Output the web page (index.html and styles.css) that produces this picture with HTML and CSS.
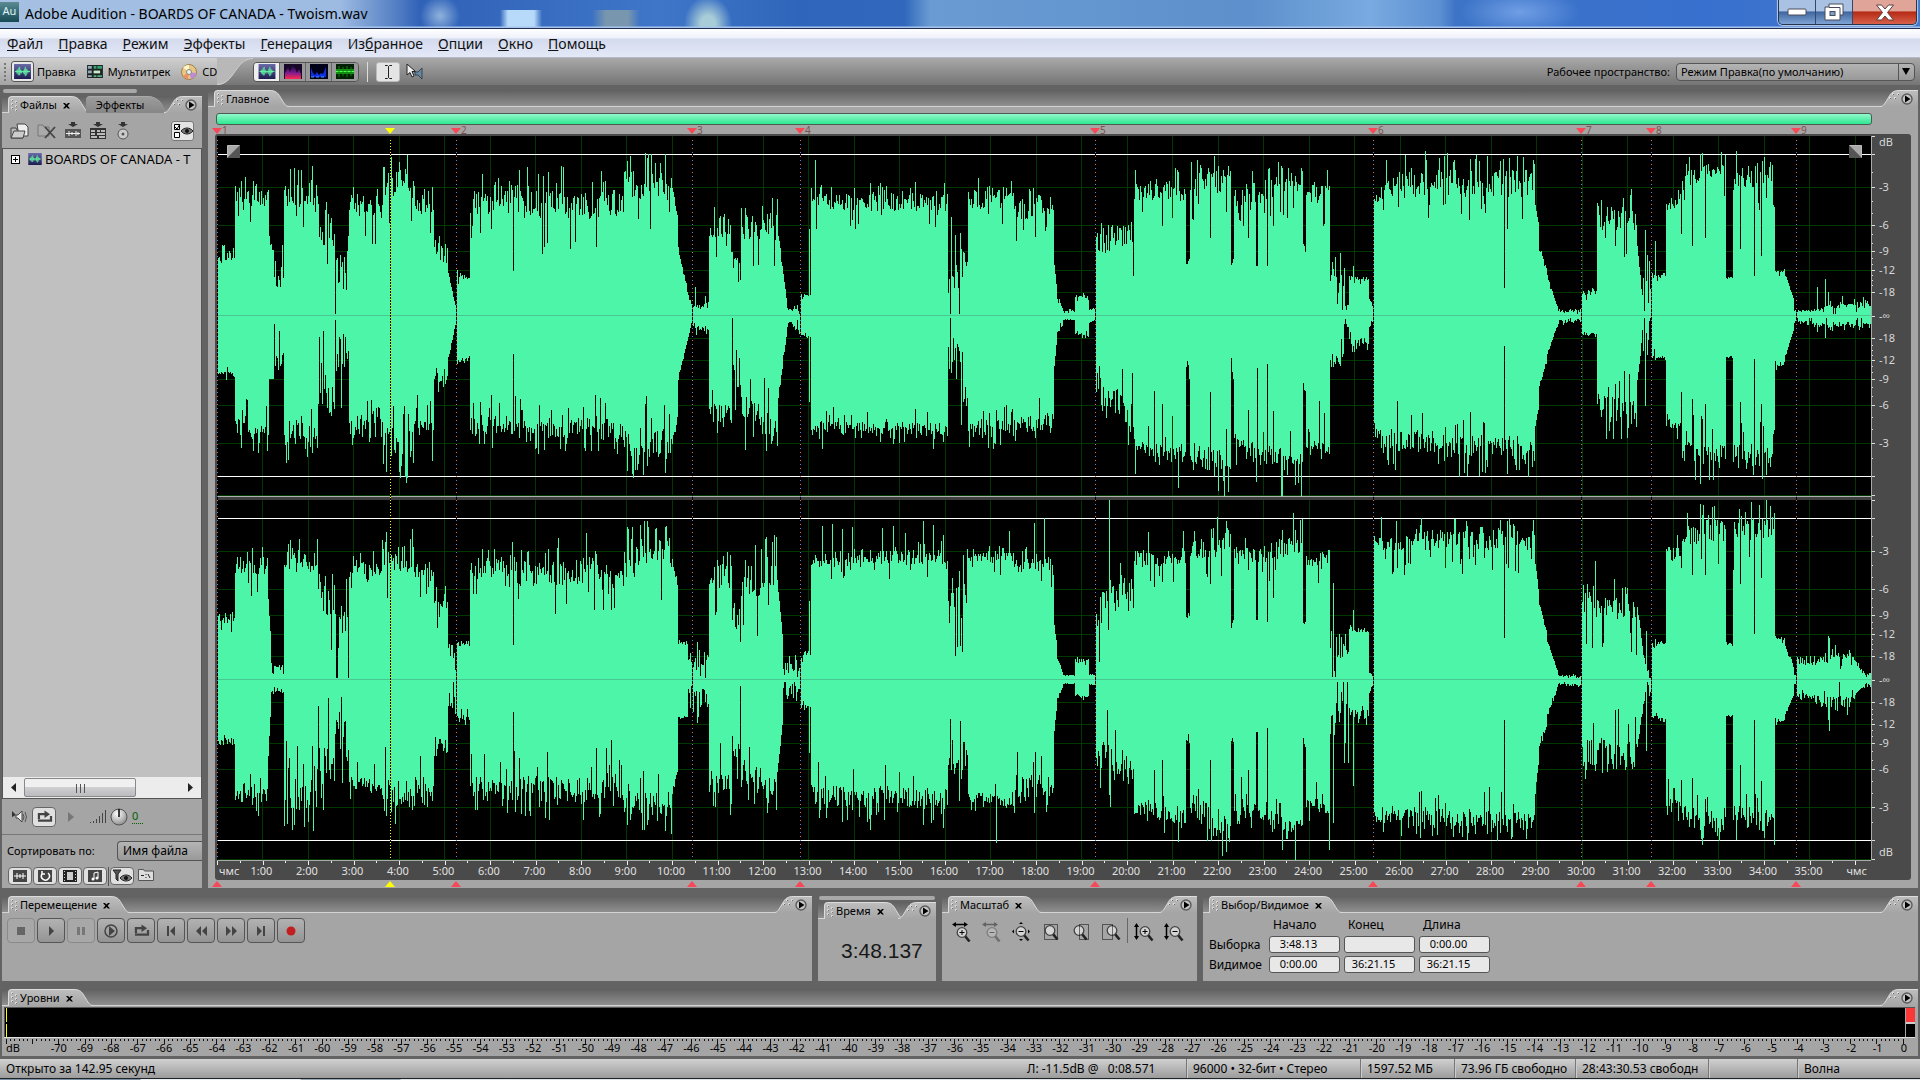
FILE: index.html
```html
<!DOCTYPE html>
<html lang="ru">
<head>
    <meta charset="UTF-8">
    <meta name="viewport" content="width=device-width, initial-scale=1.0">
    <title>Adobe Audition - BOARDS OF CANADA - Twoism.wav</title>
    <link rel="stylesheet" href="styles.css">
</head>
<body>
    <!-- Shared icons -->
    <svg class="defs" width="0" height="0" aria-hidden="true">
        <defs>
            <linearGradient id="tabFill" x1="0" y1="0" x2="0" y2="1">
                <stop offset="0" stop-color="#bdbdbd"/>
                <stop offset="1" stop-color="#a5a5a5"/>
            </linearGradient>
            <linearGradient id="navy" x1="0" y1="0" x2="0" y2="1">
                <stop offset="0" stop-color="#6a6aa8"/>
                <stop offset="1" stop-color="#1c1c50"/>
            </linearGradient>
            <linearGradient id="fire" x1="0" y1="0" x2="0" y2="1">
                <stop offset="0" stop-color="#1a0838"/>
                <stop offset="0.5" stop-color="#7a1a90"/>
                <stop offset="1" stop-color="#ff2a50"/>
            </linearGradient>
            <radialGradient id="knob" cx="0.4" cy="0.3" r="0.8">
                <stop offset="0" stop-color="#ffffff"/>
                <stop offset="1" stop-color="#808080"/>
            </radialGradient>
        </defs>
        <symbol id="slope" viewBox="0 0 20 17">
            <path d="M0 0.5 C8 0.5 9 3 13 10 C16 15 17 16.5 20 16.5 V17 H0 Z" fill="url(#tabFill)"/>
            <path d="M0 0.5 C8 0.5 9 3 13 10 C16 15 17 16.5 20 16.5" fill="none" stroke="#dcdcdc"/>
        </symbol>
        <symbol id="grip" viewBox="0 0 6 14">
            <path d="M0 1h2v2H0zM0 5h2v2H0zM0 9h2v2H0zM4 3h2v2H4zM4 7h2v2H4zM4 11h2v2H4z" fill="#d8d8d8"/>
            <path d="M1 2h1v1H1zM1 6h1v1H1zM1 10h1v1H1zM5 4h1v1H5zM5 8h1v1H5zM5 12h1v1H5z" fill="#777"/>
        </symbol>
        <symbol id="cornerDots" viewBox="0 0 12 8">
            <path d="M4 0h2v2H4zM9 0h2v2H9zM1 4h2v2H1zM6 4h2v2H6z" fill="#dadada"/>
            <path d="M5 1h1v1H5zM10 1h1v1h-1zM2 5h1v1H2zM7 5h1v1H7z" fill="#666"/>
        </symbol>
        <symbol id="menuPlay" viewBox="0 0 12 12">
            <circle cx="6" cy="6" r="5" fill="#c4c4c4" stroke="#5c5c5c" stroke-width="1.4"/>
            <path d="M4 2.5L9.5 6L4 9.5Z" fill="#000"/>
        </symbol>
        <symbol id="cross" viewBox="0 0 7 7">
            <path d="M0 1h2l1.500 1.500L5 1h2L4.600 3.800L7 6.500H5L3.500 5L2 6.500H0L2.400 3.800Z" fill="#000"/>
        </symbol>
        <symbol id="wave" viewBox="0 0 18 16">
            <rect width="18" height="16" fill="url(#navy)"/>
            <path d="M1 8h16M3 6v4M4 6v5M5 4v8M6 3v9M7 6v4M8 7v3M10 7v3M11 5v6M12 3v10M13 5v7M14 6v4M15 7v2" stroke="#60f0a0"/>
        </symbol>
        <symbol id="multitrack" viewBox="0 0 17 14">
            <rect width="17" height="14" fill="#1c2424"/>
            <path d="M1 1h4v3H1zM1 6h4v3H1zM1 11h4v2H1z" fill="#9ab"/>
            <path d="M7 1h3v3H7zM11 1h5v3h-5z" fill="#35a070"/>
            <path d="M7 6h7v3H7z" fill="#c8ecc8"/>
            <path d="M7 11h3v2H7zM11 11h5v2h-5z" fill="#50b080"/>
        </symbol>
        <symbol id="arrowDown" viewBox="0 0 10 5">
            <path d="M3 0h4v2h3L5 5L0 2h3z" fill="#333"/>
        </symbol>
        <symbol id="loop" viewBox="0 0 18 14">
            <path d="M3 10V4.500H10" fill="none" stroke="#444" stroke-width="2.400"/>
            <path d="M9 0.500L15 4.500L9 8.500Z" fill="#444"/>
            <path d="M2 11.500H16V6.500" fill="none" stroke="#444" stroke-width="2.400"/>
        </symbol>
        <symbol id="lens" viewBox="0 0 16 18">
            <path d="M10 11L14.500 16.500" stroke="#222" stroke-width="2.600"/>
            <circle cx="7" cy="7.500" r="4.800" fill="#d4d4d4" stroke="#444" stroke-width="1.300"/>
        </symbol>
        <symbol id="eye" viewBox="0 0 12 8">
            <path d="M0 4C3 0 9 0 12 4C9 8 3 8 0 4Z" fill="#777" stroke="#222"/>
            <circle cx="6" cy="4" r="2" fill="#111"/>
        </symbol>
    </svg>

    <header class="titlebar">
        <span class="app-icon">Au</span>
        <h1>Adobe Audition - BOARDS OF CANADA - Twoism.wav</h1>
        <div class="window-buttons">
            <button class="win-btn" aria-label="Свернуть">
                <svg width="20" height="8"><rect x="1" y="1" width="18" height="6" rx="1" fill="#fff" stroke="#4a4a5a"/></svg>
            </button>
            <button class="win-btn" aria-label="Развернуть">
                <svg width="20" height="18"><path d="M5 1h14v11h-3v5H1V4h4z" fill="#fff" stroke="#4a4a5a"/><path d="M5 4.500h11V12" fill="none" stroke="#4a4a5a"/><rect x="6" y="8.500" width="5" height="4" fill="#7fa0c8" stroke="#4a4a5a"/></svg>
            </button>
            <button class="win-btn win-close" aria-label="Закрыть">
                <svg width="20" height="17"><path d="M1.500 1h5L10 5l3.500-4h5l-6 7.500l6 7.500h-5L10 12l-3.500 4h-5l6-7.500z" fill="#fff" stroke="#5a4040"/></svg>
            </button>
        </div>
    </header>

    <nav class="menubar">
        <a href="#"><u>Ф</u>айл</a>
        <a href="#"><u>П</u>равка</a>
        <a href="#"><u>Р</u>ежим</a>
        <a href="#"><u>Э</u>ффекты</a>
        <a href="#"><u>Г</u>енерация</a>
        <a href="#">Из<u>б</u>ранное</a>
        <a href="#"><u>О</u>пции</a>
        <a href="#"><u>О</u>кно</a>
        <a href="#"><u>П</u>омощь</a>
    </nav>

    <div class="toolbar">
        <div class="modes">
            <svg class="mode-grip" width="6" height="20"><path d="M1 1h2v2H1zM1 5h2v2H1zM1 9h2v2H1zM1 13h2v2H1zM1 17h2v2H1z" fill="#777"/></svg>
            <button class="mode mode-on"><span class="mode-icon"><svg width="17" height="15"><use href="#wave"/></svg></span>Правка</button>
            <button class="mode"><svg width="16" height="13"><use href="#multitrack"/></svg>Мультитрек</button>
            <button class="mode mode-cd">
                <svg width="16" height="16"><circle cx="8" cy="8" r="7.500" fill="#e8c880" stroke="#a08050"/><path d="M8 8L2 3.500A7 7 0 0 1 8 1Z" fill="#fff6d0"/><path d="M8 8L15 9A7 7 0 0 1 10 15Z" fill="#c08adc"/><path d="M8 8L2 12A7 7 0 0 0 7 15Z" fill="#f09060"/><circle cx="8" cy="8" r="2.500" fill="#eee" stroke="#887"/></svg>CD</button>
        </div>
        <svg class="mode-slope" width="36" height="27" viewBox="0 0 36 27"><path d="M0 0H36C18 0 18 27 0 27Z" fill="#b8b8b8"/><path d="M36 0.500C18 0.500 18 26.500 0 26.500" fill="none" stroke="#cfcfcf"/></svg>
        <div class="views">
            <button class="view view-on" aria-label="Форма волны"><svg width="18" height="15"><use href="#wave"/></svg></button>
            <button class="view" aria-label="Спектр"><svg width="18" height="15"><rect width="18" height="15" fill="#180828"/><path d="M1 15V9L4 3L6 8L8 2L11 4L13 9L15 5L17 10V15Z" fill="url(#fire)"/></svg></button>
            <button class="view" aria-label="Панорама"><svg width="18" height="15"><rect width="18" height="15" fill="#000018"/><path d="M1 13V4L3 9L5 11L7 8L9 11L11 9L13 10L16 3V13Z" fill="#1030e0"/><path d="M1 13h15" stroke="#40a0ff" stroke-dasharray="3 2"/></svg></button>
            <button class="view" aria-label="Фаза"><svg width="18" height="15"><rect width="18" height="15" fill="#042004"/><path d="M0 5h18v5H0z" fill="#109010"/><path d="M0 7.500h18" stroke="#50ff50"/><path d="M3 2v11M7 3v9M11 2v11M15 3v9" stroke="#108010"/></svg></button>
        </div>
        <span class="tool-sep"></span>
        <button class="tool tool-on" aria-label="Выделение времени"><svg width="9" height="16"><path d="M1 1.500H3.500L4.500 2.500L5.500 1.500H8M4.500 2.500V13.500M1 14.500H3.500L4.500 13.500L5.500 14.500H8" fill="none" stroke="#222"/></svg></button>
        <button class="tool" aria-label="Прослушивание"><svg width="18" height="17"><path d="M1 1V12L4 9.500L6 14L8 13L6 8.500H9.500Z" fill="#eee" stroke="#222"/><path d="M9 9h3l4-4v11l-4-4H9z" fill="#6888a0" stroke="#345"/></svg></button>
        <span class="spacer"></span>
        <label class="ws-label" for="workspace">Рабочее пространство:</label>
        <select id="workspace" class="ws-select"><option>Режим Правка(по умолчанию)</option></select>
    </div>

    <main class="work">
        <section class="panel files">
            <div class="drag-bar"></div>
            <div class="panel-head">
                <div class="tab"><svg width="6" height="14"><use href="#grip"/></svg>Файлы<svg class="close" width="7" height="7"><use href="#cross"/></svg></div>
                <svg class="slope" width="20" height="17"><use href="#slope"/></svg>
                <div class="tab-back">Эффекты</div>
                <span class="spacer"></span>
                <svg class="slope flip" width="20" height="17"><use href="#slope"/></svg>
                <div class="corner"><svg class="dots" width="12" height="8"><use href="#cornerDots"/></svg><button aria-label="Меню панели"><svg width="12" height="12"><use href="#menuPlay"/></svg></button></div>
            </div>
            <div class="file-tools">
                <button aria-label="Импорт"><svg width="20" height="18"><path d="M1 6h5l1 2h6v8H1z" fill="#bbb" stroke="#444"/><path d="M7 2h8l3 3v9H9z" fill="#eee" stroke="#444"/><path d="M1 16L4 9h11l-2 7z" fill="#ccc" stroke="#444"/></svg></button>
                <button aria-label="Закрыть файлы"><svg width="20" height="18"><path d="M1 3h5l1 2h5v9H1z" fill="#aaa" stroke="#777"/><path d="M8 5L18 16M18 5L8 16" stroke="#444" stroke-width="1.800"/></svg></button>
                <button aria-label="Вставить в правку"><svg width="18" height="18"><use href="#arrowDown" x="4" width="10" height="5"/><path d="M1 7h16v9H1z" fill="#555"/><path d="M2 11.500h14M5 9v5M8 10v3M12 9v5M14 10v3" stroke="#eee"/></svg></button>
                <button aria-label="Вставить в мультитрек"><svg width="18" height="18"><use href="#arrowDown" x="4" width="10" height="5"/><path d="M1 6h16v11H1z" fill="#333"/><path d="M2 8h4v2H2zM8 8h3v2H8zM12 8h4v2h-4zM2 11h4v2H2zM8 11h8v2H8zM2 14h6v2H2zM10 14h6v2h-6z" fill="#bbb"/></svg></button>
                <button aria-label="Вставить в CD"><svg width="18" height="18"><use href="#arrowDown" x="4" width="10" height="5"/><circle cx="9" cy="12" r="5" fill="#ccc" stroke="#555"/><circle cx="9" cy="12" r="1.500" fill="#555"/></svg></button>
                <span class="spacer"></span>
                <button class="file-options" aria-label="Параметры"><svg width="20" height="16"><path d="M1.500 1.500h5v5h-5zM1.500 9.500h5v5h-5z" fill="#fff" stroke="#000"/><path d="M2 4l2 2l3-5" fill="none" stroke="#000"/><use href="#eye" x="8" y="4" width="12" height="8"/></svg></button>
            </div>
            <div class="file-list">
                <div class="file-row">
                    <svg width="9" height="9"><rect x="0.500" y="0.500" width="8" height="8" fill="#fff" stroke="#000"/><path d="M2 4.500h5M4.500 2v5" stroke="#000"/></svg>
                    <svg width="14" height="12"><use href="#wave"/></svg>
                    <span>BOARDS OF CANADA - T</span>
                </div>
                <div class="hscroll">
                    <button aria-label="Влево"><svg width="6" height="9"><path d="M5 0v9L0 4.500z" fill="#222"/></svg></button>
                    <div class="hscroll-track"><div class="hscroll-thumb"><svg width="11" height="9"><path d="M1.500 0v9M5.500 0v9M9.500 0v9" stroke="#555"/></svg></div></div>
                    <button aria-label="Вправо"><svg width="6" height="9"><path d="M0 0v9L5 4.500z" fill="#222"/></svg></button>
                </div>
            </div>
            <div class="preview">
                <svg width="17" height="16"><path d="M1 2v6l4-2z" fill="#333"/><path d="M5 6h2l4-4v11l-4-4H5z" fill="#eee" stroke="#444"/><path d="M12 5q2 3 0 6M14 3q3 5 0 10" fill="none" stroke="#555"/></svg>
                <button class="light" aria-label="Цикл"><svg width="17" height="13"><use href="#loop"/></svg></button>
                <svg class="preview-play" width="6" height="10"><path d="M0 0v10L6 5z" fill="#777"/></svg>
                <svg width="16" height="14"><path d="M0.500 12v1M3.500 11v2M6.500 9v4M9.500 6v7M12.500 3v10M15.500 0v13" stroke="#444"/></svg>
                <svg width="18" height="18"><circle cx="9" cy="9" r="8" fill="url(#knob)" stroke="#555"/><path d="M9 1v8" stroke="#000" stroke-width="1.500"/></svg>
                <a class="volume" href="#">0</a>
            </div>
            <div class="sort">
                <label for="sort">Сортировать по:</label>
                <select id="sort"><option>Имя файла</option></select>
            </div>
            <div class="filters">
                <button class="light" aria-label="Звук"><svg width="14" height="12"><rect width="14" height="12" fill="#444"/><path d="M1 6h12M4 3v6M7 4v4M10 3v6" stroke="#fff"/></svg></button>
                <button class="light" aria-label="Петли"><svg width="14" height="12"><rect width="14" height="12" fill="#444"/><path d="M4 4a4 4 0 1 0 6-1M4 1v3h3" fill="none" stroke="#fff" stroke-width="1.500"/></svg></button>
                <button class="light" aria-label="Видео"><svg width="14" height="12"><rect width="14" height="12" fill="#222"/><path d="M4 2h6v8H4zM1 1h1v1H1zM1 4h1v1H1zM1 7h1v1H1zM1 10h1v1H1zM12 1h1v1h-1zM12 4h1v1h-1zM12 7h1v1h-1zM12 10h1v1h-1z" fill="#ccc"/></svg></button>
                <button class="light" aria-label="MIDI"><svg width="14" height="12"><rect width="14" height="12" fill="#444"/><path d="M6 9V3l4-1v6" fill="none" stroke="#fff"/><circle cx="5" cy="9" r="1.500" fill="#fff"/><circle cx="9" cy="8" r="1.500" fill="#fff"/></svg></button>
                <span class="filter-sep"></span>
                <button class="light" aria-label="Фильтр"><svg width="20" height="15"><path d="M1 1h8L6 5v7L4 10V5z" fill="#555" stroke="#222"/><use href="#eye" x="8" y="5" width="12" height="8"/></svg></button>
                <button class="path-btn" aria-label="Полный путь"><svg width="16" height="12"><path d="M0.500 0.500h5l1 1.500h9v9.500h-15z" fill="#ddd" stroke="#555"/><path d="M3 6.500h3M8 5v1M8 8v1M10 5l2 4" stroke="#222"/></svg></button>
            </div>
        </section>

        <section class="panel main">
            <div class="panel-head">
                <div class="tab"><svg width="6" height="14"><use href="#grip"/></svg>Главное</div>
                <svg class="slope" width="20" height="17"><use href="#slope"/></svg>
                <span class="spacer"></span>
                <svg class="slope flip" width="20" height="17"><use href="#slope"/></svg>
                <div class="corner"><svg class="dots" width="12" height="8"><use href="#cornerDots"/></svg><button aria-label="Меню панели"><svg width="12" height="12"><use href="#menuPlay"/></svg></button></div>
            </div>
            <div class="editor">
                <div class="overview"></div>
                <div class="markers" id="markersTop"></div>
                <div class="frame">
                    <div class="plot" id="plot">
                        <svg class="channel" id="left" viewBox="0 0 1654 360" preserveAspectRatio="none"></svg>
                        <div class="divider"></div>
                        <svg class="channel" id="right" viewBox="0 0 1654 360" preserveAspectRatio="none"></svg>
                        <svg class="fade fade-in" width="13" height="13"><rect width="13" height="13" fill="#555"/><path d="M1 12V1H12z" fill="#aaa"/><path d="M0.500 12.500V0.500H12.500" fill="none" stroke="#bbb"/></svg>
                        <svg class="fade fade-out" width="13" height="13"><rect width="13" height="13" fill="#555"/><path d="M1 1H12V12z" fill="#aaa"/><path d="M0.500 0.500H12.500V12.500" fill="none" stroke="#bbb"/></svg>
                    </div>
                    <div class="scale">
                        <div class="scale-half" id="scaleLeft"></div>
                        <div class="scale-gap"></div>
                        <div class="scale-half" id="scaleRight"></div>
                    </div>
                    <div class="timeline" id="timeline"></div>
                </div>
                <div class="markers markers-low" id="markersLow"></div>
            </div>
        </section>
    </main>

    <div class="dock">
        <section class="panel transport">
            <div class="panel-head">
                <div class="tab"><svg width="6" height="14"><use href="#grip"/></svg>Перемещение<svg class="close" width="7" height="7"><use href="#cross"/></svg></div>
                <svg class="slope" width="20" height="17"><use href="#slope"/></svg>
                <span class="spacer"></span>
                <svg class="slope flip" width="20" height="17"><use href="#slope"/></svg>
                <div class="corner"><svg class="dots" width="12" height="8"><use href="#cornerDots"/></svg><button aria-label="Меню панели"><svg width="12" height="12"><use href="#menuPlay"/></svg></button></div>
            </div>
            <div class="transport-row">
                <button disabled aria-label="Стоп"><svg width="16" height="14"><path d="M4 3h8v8H4z" fill="#666"/></svg></button>
                <button aria-label="Пуск"><svg width="16" height="14"><path d="M6 2v10l5-5z" fill="#444"/></svg></button>
                <button disabled aria-label="Пауза"><svg width="16" height="14"><path d="M4 3h3v8H4zM9 3h3v8H9z" fill="#777"/></svg></button>
                <button aria-label="До конца"><svg width="16" height="14"><circle cx="8" cy="7" r="6" fill="none" stroke="#444" stroke-width="1.500"/><path d="M6 2v10l6-5z" fill="#444"/></svg></button>
                <button aria-label="Цикл"><svg width="17" height="13"><use href="#loop"/></svg></button>
                <button aria-label="В начало"><svg width="16" height="14"><path d="M4 2h2v10H4zM12 2v10L7 7z" fill="#444"/></svg></button>
                <button aria-label="Назад"><svg width="16" height="14"><path d="M8 2v10L3 7zM14 2v10L9 7z" fill="#444"/></svg></button>
                <button aria-label="Вперёд"><svg width="16" height="14"><path d="M3 2v10l5-5zM9 2v10l5-5z" fill="#444"/></svg></button>
                <button aria-label="В конец"><svg width="16" height="14"><path d="M4 2v10l5-5zM10 2h2v10h-2z" fill="#444"/></svg></button>
                <button aria-label="Запись"><svg width="16" height="14"><circle cx="8" cy="7" r="4.500" fill="#c22020"/></svg></button>
            </div>
        </section>

        <section class="panel time">
            <div class="drag-bar"></div>
            <div class="panel-head">
                <div class="tab"><svg width="6" height="14"><use href="#grip"/></svg>Время<svg class="close" width="7" height="7"><use href="#cross"/></svg></div>
                <svg class="slope" width="20" height="17"><use href="#slope"/></svg>
                <span class="spacer"></span>
                <svg class="slope flip" width="20" height="17"><use href="#slope"/></svg>
                <div class="corner"><svg class="dots" width="12" height="8"><use href="#cornerDots"/></svg><button aria-label="Меню панели"><svg width="12" height="12"><use href="#menuPlay"/></svg></button></div>
            </div>
            <div class="clock">3:48.137</div>
        </section>

        <section class="panel zoom">
            <div class="panel-head">
                <div class="tab"><svg width="6" height="14"><use href="#grip"/></svg>Масштаб<svg class="close" width="7" height="7"><use href="#cross"/></svg></div>
                <svg class="slope" width="20" height="17"><use href="#slope"/></svg>
                <span class="spacer"></span>
                <svg class="slope flip" width="20" height="17"><use href="#slope"/></svg>
                <div class="corner"><svg class="dots" width="12" height="8"><use href="#cornerDots"/></svg><button aria-label="Меню панели"><svg width="12" height="12"><use href="#menuPlay"/></svg></button></div>
            </div>
            <div class="zoom-row">
                <button aria-label="Увеличить по горизонтали"><svg width="20" height="20"><use href="#lens" x="4" y="3" width="16" height="18"/><path d="M8.500 10.500h5M11 8v5" stroke="#000"/><path d="M3 2.500h12" stroke="#000" stroke-width="1.500"/><path d="M1 2.500L5 0v5zM17 2.500L13 0v5z"/></svg></button>
                <button disabled aria-label="Уменьшить по горизонтали"><svg width="20" height="20"><use href="#lens" x="4" y="3" width="16" height="18"/><path d="M8.500 10.500h5" stroke="#000"/><path d="M3 2.500h12" stroke="#000" stroke-width="1.500"/><path d="M1 2.500L5 0v5zM17 2.500L13 0v5z"/></svg></button>
                <button aria-label="Показать всё"><svg width="20" height="20"><use href="#lens" x="3" y="2" width="16" height="18"/><path d="M7.500 9.500h5" stroke="#000"/><path d="M10 0l2 2H8zM10 19l2-2H8zM1 9.500l2-2v4zM19 9.500l-2-2v4z"/></svg></button>
                <button aria-label="К выделению"><svg width="20" height="20"><path d="M3.500 2.500h13v15h-13z" fill="none" stroke="#000" stroke-dasharray="1 1"/><use href="#lens" x="2" y="1" width="16" height="18"/></svg></button>
                <button aria-label="К левому краю"><svg width="20" height="20"><use href="#lens" x="1" y="1" width="16" height="18"/><path d="M8.500 2.500h9v15h-9z" fill="none" stroke="#000" stroke-dasharray="1 1"/></svg></button>
                <button aria-label="К правому краю"><svg width="20" height="20"><use href="#lens" x="4" y="1" width="16" height="18"/><path d="M1.500 2.500h10v15h-10z" fill="none" stroke="#000" stroke-dasharray="1 1"/></svg></button>
                <span class="zoom-sep"></span>
                <button aria-label="Увеличить по вертикали"><svg width="20" height="20"><use href="#lens" x="4" y="2" width="16" height="18"/><path d="M8.500 9.500h5M11 7v5" stroke="#000"/><path d="M2.500 3v12" stroke="#000" stroke-width="1.500"/><path d="M2.500 1L5 5H0zM2.500 18L5 14H0z"/></svg></button>
                <button aria-label="Уменьшить по вертикали"><svg width="20" height="20"><use href="#lens" x="4" y="2" width="16" height="18"/><path d="M8.500 9.500h5" stroke="#000"/><path d="M2.500 3v12" stroke="#000" stroke-width="1.500"/><path d="M2.500 1L5 5H0zM2.500 18L5 14H0z"/></svg></button>
            </div>
        </section>

        <section class="panel selection">
            <div class="panel-head">
                <div class="tab"><svg width="6" height="14"><use href="#grip"/></svg>Выбор/Видимое<svg class="close" width="7" height="7"><use href="#cross"/></svg></div>
                <svg class="slope" width="20" height="17"><use href="#slope"/></svg>
                <span class="spacer"></span>
                <svg class="slope flip" width="20" height="17"><use href="#slope"/></svg>
                <div class="corner"><svg class="dots" width="12" height="8"><use href="#cornerDots"/></svg><button aria-label="Меню панели"><svg width="12" height="12"><use href="#menuPlay"/></svg></button></div>
            </div>
            <table class="ranges">
                <tr><td></td><th scope="col">Начало</th><th scope="col">Конец</th><th scope="col">Длина</th></tr>
                <tr>
                    <th scope="row">Выборка</th>
                    <td><input value="3:48.13" aria-label="Выборка начало"></td>
                    <td><input value="" aria-label="Выборка конец"></td>
                    <td><input value="0:00.00" aria-label="Выборка длина"></td>
                </tr>
                <tr>
                    <th scope="row">Видимое</th>
                    <td><input value="0:00.00" aria-label="Видимое начало"></td>
                    <td><input value="36:21.15" aria-label="Видимое конец"></td>
                    <td><input value="36:21.15" aria-label="Видимое длина"></td>
                </tr>
            </table>
        </section>
    </div>

    <section class="panel levels">
        <div class="panel-head">
            <div class="tab"><svg width="6" height="14"><use href="#grip"/></svg>Уровни<svg class="close" width="7" height="7"><use href="#cross"/></svg></div>
            <svg class="slope" width="20" height="17"><use href="#slope"/></svg>
            <span class="spacer"></span>
            <svg class="slope flip" width="20" height="17"><use href="#slope"/></svg>
            <div class="corner"><svg class="dots" width="12" height="8"><use href="#cornerDots"/></svg><button aria-label="Меню панели"><svg width="12" height="12"><use href="#menuPlay"/></svg></button></div>
        </div>
        <div class="meter">
            <div class="meter-bars"><i></i><i></i></div>
            <div class="meter-clip"><i class="clip-on"></i><i></i></div>
        </div>
        <div class="meter-scale" id="meterScale">
            <svg viewBox="0 0 1898 5" preserveAspectRatio="none"></svg>
        </div>
    </section>

    <footer class="status">
        <span class="status-text">Открыто за 142.95 секунд</span>
        <span class="status-peak">Л: -11.5dB @&nbsp;&nbsp; 0:08.571</span>
        <span class="cell cell-format">96000 • 32-бит • Стерео</span>
        <span class="cell cell-size">1597.52 МБ</span>
        <span class="cell cell-disk">73.96 ГБ свободно</span>
        <span class="cell cell-time">28:43:30.53 свободн</span>
        <span class="cell cell-empty"></span>
        <span class="cell cell-view">Волна</span>
    </footer>
    <div class="taskbar"></div>

    <script src="script.js"></script>
</body>
</html>
```
FILE: styles.css
```css
* {
    box-sizing: border-box;
}
body {
    margin: 0;
    min-height: 100vh;
    display: flex;
    flex-direction: column;
    background: #636363;
    color: #000;
    font-family: "Noto Sans", "Open Sans", sans-serif;
    font-size: 11px;
    line-height: 16px;
    overflow-x: hidden;
}
button {
    margin: 0;
    padding: 0;
    border: 0;
    background: none;
    color: inherit;
    font: inherit;
    display: flex;
    align-items: center;
    justify-content: center;
}
svg {
    display: block;
    flex: none;
}
.defs {
    position: absolute;
}
.spacer {
    flex: 1;
}

/* Title bar */
.titlebar {
    display: flex;
    align-items: center;
    height: 29px;
    border-bottom: 1px solid #1d2f55;
    background:
        linear-gradient(to bottom, rgba(255, 255, 255, 0) 26px, #a8c4ec 27px),
        radial-gradient(ellipse 20px 20px at 440px 16px, #8fb2dc, rgba(90, 140, 210, 0)),
        linear-gradient(to right, rgba(190, 220, 248, 0) 500px, #b8dafa 508px 534px, rgba(190, 220, 248, 0) 542px) 0 10px no-repeat,
        linear-gradient(to right, rgba(130, 155, 170, 0) 592px, #7896ae 606px 628px, rgba(130, 155, 170, 0) 640px) 0 10px no-repeat,
        radial-gradient(ellipse 24px 28px at 708px 24px, #a8ccd8 30%, rgba(90, 140, 210, 0)),
        linear-gradient(to right, rgba(110, 160, 215, 0) 905px, #6a9bd2 930px, #5d90cc 1250px, #79aae0 1370px, #5c90d2 1440px, rgba(110, 160, 215, 0) 1455px),
        radial-gradient(ellipse 60px 24px at 1520px 12px, #6f9ee4, rgba(90, 140, 210, 0)),
        linear-gradient(to right, #a5c0e2, #9dbbe2 340px, #5580c4 395px, #3062b8 420px, #3f76c8 660px, #2f66bb 800px, #3d74c6 1450px, #3870cf 1700px, #4279cc);
}
.app-icon {
    width: 19px;
    height: 20px;
    margin-bottom: 4px;
    background: linear-gradient(#5b8a93, #164a54);
    color: #dff4f6;
    line-height: 18px;
    text-align: center;
}
.titlebar h1 {
    flex: 1;
    margin: 0 0 0 6px;
    font-size: 14px;
    font-weight: normal;
    line-height: 28px;
}
.window-buttons {
    display: flex;
    align-self: flex-start;
    height: 25px;
    margin-right: 3px;
    border: 1px solid #26344e;
    border-top: 0;
    border-radius: 0 0 5px 5px;
    overflow: hidden;
    box-shadow: 0 0 1px 1px #b8cdec;
}
.win-btn {
    width: 37px;
    border-right: 1px solid #33486c;
    background: linear-gradient(#a9c1e2 45%, #3f669f 50%, #7fa3d4);
}
.win-close {
    width: 63px;
    border-right: 0;
    background: linear-gradient(#e0a498 45%, #b52a15 50%, #d8604a);
}

/* Menu */
.menubar {
    display: flex;
    gap: 15px;
    height: 29px;
    padding: 0 7px;
    border-bottom: 1px solid #b4b8c8;
    background: linear-gradient(#ffffff, #eef1fa 9px, #d3daed 10px, #e4e9f7);
}
.menubar a {
    color: #111;
    font-size: 14px;
    line-height: 30px;
    text-decoration: none;
}

/* Toolbar */
.toolbar {
    display: flex;
    align-items: center;
    height: 27px;
    padding-right: 5px;
    background: linear-gradient(#a8a8a8, #757575);
}
.modes {
    display: flex;
    align-items: center;
    align-self: stretch;
    gap: 11px;
    padding-left: 3px;
    background: linear-gradient(#cfcfcf, #a4a4a4);
}
.mode-grip {
    margin-right: -9px;
}
.mode {
    gap: 5px;
}
.mode-on {
    gap: 3px;
}
.mode-icon {
    padding: 2px;
    border: 1px solid #555;
    border-radius: 3px;
    background: #e8e8e8;
}
.mode-slope {
    align-self: stretch;
}
.views {
    display: flex;
    height: 20px;
    border: 1px solid #555;
    border-radius: 4px;
    overflow: hidden;
}
.view {
    width: 26px;
    border-right: 1px solid #666;
    background: #999;
}
.view:last-child {
    border-right: 0;
}
.view-on {
    background: #eee;
}
.tool-sep {
    width: 1px;
    height: 20px;
    margin: 0 8px;
    background: #ddd;
}
.tool {
    width: 24px;
    height: 20px;
    margin-right: 3px;
}
.tool-on {
    border: 1px solid #bbb;
    border-radius: 3px;
    background: #e4e4e4;
}
.ws-label {
    margin-right: 6px;
}
select {
    appearance: none;
    border: 1px solid #555;
    border-radius: 4px;
    color: #000;
    font: inherit;
}
.ws-select {
    width: 239px;
    height: 18px;
    padding: 0 4px;
    background:
        url("data:image/svg+xml,%3Csvg xmlns='http://www.w3.org/2000/svg' width='8' height='7'%3E%3Cpath d='M0 0h8L4 7z'/%3E%3C/svg%3E") right 4px center no-repeat,
        linear-gradient(#555, #555) right 15px top / 1px 100% no-repeat,
        linear-gradient(#b4b4b4, #999);
}

/* Panels */
.panel {
    display: flex;
    flex-direction: column;
    min-width: 0;
}
.panel-head {
    display: flex;
    flex: none;
    height: 17px;
    background: linear-gradient(#d4d4d4, #d4d4d4) bottom / 100% 1px no-repeat, linear-gradient(#606060, #929292);
    padding-left: 6px;
}
.tab {
    display: flex;
    align-items: center;
    gap: 3px;
    padding: 0 0 0 2px;
    border-top: 1px solid #dcdcdc;
    border-left: 1px solid #dcdcdc;
    border-radius: 4px 0 0 0;
    background: linear-gradient(#bdbdbd, #a5a5a5);
    white-space: nowrap;
}
.close {
    margin-left: 3px;
}
.slope + .spacer {
    margin-right: -12px;
}
.flip {
    transform: scaleX(-1);
}
.corner {
    display: flex;
    align-items: center;
    gap: 1px;
    padding-right: 5px;
    border-top: 1px solid #dcdcdc;
    background: linear-gradient(#bdbdbd, #a5a5a5);
    z-index: 1;
}
.corner .dots {
    margin: -4px 0 0 -12px;
}
.drag-bar {
    height: 4px;
    margin: 0 1px 3px;
    border-radius: 2px;
    background: #a8a8a8;
}

.work {
    flex: 1;
    display: grid;
    grid-template-columns: 200px 1fr;
    gap: 6px;
    padding: 0 2px;
}

/* Files */
.files {
    padding-top: 4px;
}
.files .drag-bar {
    width: 134px;
}
.tab-back {
    padding: 0 20px 0 10px;
    margin-left: -4px;
    border-top: 1px solid #aaa;
    border-radius: 4px 16px 0 0;
    background: linear-gradient(#9c9c9c, #868686);
}
.file-tools {
    display: flex;
    align-items: center;
    gap: 7px;
    height: 35px;
    padding: 0 8px;
    background: #a5a5a5;
}
.file-options {
    width: 23px;
    height: 20px;
    border: 1px solid #777;
    border-radius: 3px;
    background: #e4e4e4;
}
.file-list {
    flex: 1;
    display: flex;
    flex-direction: column;
    justify-content: space-between;
    border: 1px solid #555;
    background: #c0c0c0;
}
.file-row {
    display: flex;
    align-items: center;
    gap: 3px;
    height: 20px;
    padding-left: 8px;
    font-size: 13px;
    white-space: nowrap;
}
.file-row svg:first-child {
    margin-right: 5px;
}
.hscroll {
    display: flex;
    height: 21px;
    background: #ececec;
}
.hscroll button {
    width: 21px;
}
.hscroll-track {
    flex: 1;
}
.hscroll-thumb {
    width: 112px;
    height: 19px;
    margin-top: 1px;
    padding: 5px 50px;
    border: 1px solid #888;
    border-radius: 2px;
    background: linear-gradient(#f0f0f0 45%, #cfcfd2 50%, #bcbcc0);
}
.preview {
    display: flex;
    align-items: center;
    gap: 4px;
    height: 36px;
    padding-left: 9px;
    border-bottom: 1px solid #777;
    background: #a5a5a5;
}
.preview-play {
    margin: 0 12px 0 8px;
}
.light {
    width: 24px;
    height: 20px;
    border: 1px solid #666;
    border-radius: 4px;
    background: #e0e0e0;
}
.volume {
    width: 11px;
    border-bottom: 1px dotted #006000;
    color: #006000;
    text-decoration: none;
    line-height: 14px;
}
.sort {
    display: flex;
    align-items: center;
    justify-content: space-between;
    height: 32px;
    padding-left: 5px;
    background: #a5a5a5;
}
.sort select {
    width: 85px;
    height: 20px;
    padding: 0 5px;
    border-right: 0;
    border-radius: 4px 0 0 4px;
    background: linear-gradient(#b4b4b4, #999);
    font-size: 12px;
}
.filters {
    display: flex;
    gap: 1px;
    height: 21px;
    padding-left: 6px;
    background: #a5a5a5;
}
.filters .light {
    height: 18px;
}
.filter-sep {
    width: 1px;
    height: 19px;
    background: #555;
}
.path-btn {
    height: 16px;
    padding-left: 3px;
}

/* Editor */
.main {
    padding-top: 5px;
}
.editor {
    flex: 1;
    display: flex;
    flex-direction: column;
    padding: 6px 7px 0;
    background: #a5a5a5;
}
.overview {
    height: 12px;
    margin: 0 39px 0 1px;
    border: 1px solid #4c5c54;
    border-radius: 3px;
    background: linear-gradient(#92f8cc, #2ee890);
}
.markers {
    position: relative;
    height: 9px;
    margin: 0 40px 0 2px;
}
.markers-low {
    height: 8px;
}
.marker {
    position: absolute;
    top: 3px;
    margin-left: -5px;
    border: 5px solid transparent;
    border-top: 6px solid #f84858;
    border-bottom: 0;
}
.markers-low .marker {
    top: 1px;
    border-top: 0;
    border-bottom: 6px solid #f84858;
}
.markers .marker-cursor {
    border-top-color: #ff0;
    border-bottom-color: #ff0;
}
.marker-number {
    position: absolute;
    top: 0;
    margin-left: 5px;
    color: #805050;
    font-size: 10px;
    line-height: 10px;
}
.frame {
    flex: 1;
    display: grid;
    grid-template-columns: 1fr 40px;
    grid-template-rows: 1fr 20px;
    padding: 2px 0 0 2px;
    border-radius: 3px;
    background: #4a4a4a;
}
.plot {
    position: relative;
    display: flex;
    flex-direction: column;
}
.channel {
    width: 100%;
    flex: 1;
    min-height: 100px;
    height: 0;
    background: #000;
    shape-rendering: crispEdges;
}
.divider {
    height: 4px;
    border-top: 1px solid #b0b0b0;
    background: #404040;
}
.cue {
    position: absolute;
    top: 4px;
    bottom: 0;
    width: 1px;
    background: repeating-linear-gradient(#ff6060 0 1px, #000 1px 4px, #6080f0 4px 5px, #000 5px 8px);
}
.cue-cursor {
    background: repeating-linear-gradient(#ff0 0 1px, #000 1px 3px);
}
.fade {
    position: absolute;
    top: 9px;
}
.fade-in {
    left: 10px;
}
.fade-out {
    right: 9px;
}
.scale {
    display: flex;
    flex-direction: column;
    border-left: 1px solid #aaa;
    color: #d8d8d8;
}
.scale-half {
    position: relative;
    flex: 1;
}
.scale-gap {
    height: 4px;
}
.scale-half span {
    position: absolute;
    left: 7px;
    line-height: 12px;
    margin-top: -6px;
}
.scale-half i {
    position: absolute;
    left: 0;
    width: 3px;
    height: 1px;
    background: #ddd;
}
.scale-half .minor {
    width: 1px;
}
.timeline {
    position: relative;
    border-top: 1px solid #aaa;
    color: #e0e0e0;
}
.timeline span {
    position: absolute;
    top: 2px;
    width: 40px;
    margin-left: -21px;
    text-align: center;
}
.timeline i {
    position: absolute;
    top: 0;
    width: 1px;
    height: 4px;
    background: #eee;
}
.timeline .minor {
    height: 2px;
}

/* Lower dock */
.dock {
    display: grid;
    grid-template-columns: 810fr 118fr 255fr 715fr;
    gap: 6px;
    height: 93px;
    padding: 8px 2px 0;
}
.dock .panel {
    background: #a5a5a5;
}
.dock .time {
    background: linear-gradient(#636363 20px, #a5a5a5 20px);
}
.time .drag-bar {
    margin-bottom: 2px;
}
.transport-row {
    display: flex;
    gap: 2px;
    padding: 5px;
}
.transport-row button {
    width: 28px;
    height: 25px;
    border: 1px solid #555;
    border-radius: 4px;
    background: linear-gradient(#b2b2b2, #949494);
}
.transport-row button:disabled {
    border-color: #8a8a8a;
    background: #a8a8a8;
}
.clock {
    flex: 1;
    padding: 18px 0 0 23px;
    font-family: "Liberation Sans", Arial, sans-serif;
    font-size: 21px;
    line-height: 28px;
    color: #181818;
}
.zoom-row {
    display: flex;
    gap: 10px;
    padding: 7px 0 0 9px;
}
.zoom-row button:disabled {
    opacity: 0.4;
}
.zoom-sep {
    width: 1px;
    height: 25px;
    margin: -2px -4px 0 -4px;
    background: #666;
}
.ranges {
    align-self: flex-start;
    border-collapse: collapse;
    margin: 1px 0 0 4px;
    font-size: 12px;
    line-height: 19px;
}
.ranges td,
.ranges th {
    padding: 0 2px;
    height: 20px;
    font-weight: normal;
    text-align: left;
}
.ranges th[scope="col"] {
    padding-left: 6px;
}
.ranges th[scope="row"] {
    min-width: 60px;
}
.ranges input {
    display: block;
    width: 71px;
    height: 17px;
    padding: 0 12px 1px 0;
    border: 1px solid #555;
    border-radius: 3px;
    background: #e8e8e8;
    font: inherit;
    font-size: 11px;
    text-align: center;
}

/* Levels */
.levels {
    margin: 8px 2px 0;
    height: 67px;
    background: #a5a5a5;
}
.meter {
    display: grid;
    grid-template-columns: 1fr 9px;
    gap: 1px;
    height: 31px;
    margin: 1px 3px 0 2px;
    border-top: 1px solid #555;
    border-bottom: 1px solid #ddd;
}
.meter-bars,
.meter-clip {
    display: grid;
    gap: 2px;
}
.meter-bars {
    padding-left: 1px;
    border-left: 1px solid #555;
    background: #000;
}
.meter-bars i {
    border-left: 1px solid #ff0;
}
.meter-clip {
    background: #ccc;
}
.meter-clip i {
    background: #000;
}
.meter-clip .clip-on {
    background: #fa3838;
}
.meter-scale {
    position: relative;
    margin: 1px 14px 0 4px;
}
.meter-scale svg {
    width: 100%;
    height: 5px;
    shape-rendering: crispEdges;
}
.meter-scale span {
    position: absolute;
    top: 1px;
    width: 30px;
    margin-left: -15px;
    text-align: center;
}
.meter-scale .unit {
    margin-left: 0;
    text-align: left;
}

/* Status bar */
.status {
    display: flex;
    height: 20px;
    margin-top: 3px;
    border-bottom: 1px solid #222;
    background: linear-gradient(#d0d0d0, #9c9c9c);
    font-size: 12px;
    line-height: 20px;
    white-space: nowrap;
}
.status-text {
    flex: 1;
    padding-left: 6px;
}
.status-peak {
    width: 159px;
}
.cell {
    padding-left: 6px;
    border-left: 1px solid #777;
    box-shadow: inset 1px 0 #ccc;
}
.cell-format {
    width: 174px;
}
.cell-size {
    width: 94px;
}
.cell-disk {
    width: 121px;
}
.cell-time {
    width: 133px;
}
.cell-empty {
    width: 89px;
}
.cell-view {
    width: 123px;
}
.taskbar {
    height: 1px;
    background: linear-gradient(to right, #7890a8 140px, #e8eef4 141px 300px, #98a8b8 301px 400px, #dde4ea 401px);
}
```
FILE: script.js
```
const WIDTH = 1654;
const MINUTES = 36.35;
const GREEN = "#4df5a8";
const cues = [0, 239, 475, 583, 878, 1156, 1364, 1434, 1579];
const cursor = 173;

// [start, end, up start, up end, down start, down end, up spikes, down spikes]
const leftWave = [
    [0, 18, 54, 54, 54, 58, 16, 10], [18, 52, 112, 112, 105, 112, 22, 25], [52, 57, 75, 55, 66, 60, 8, 6],
    [57, 67, 32, 32, 28, 28, 38, 42], [67, 101, 112, 115, 108, 112, 34, 36], [101, 118, 80, 70, 70, 65, 55, 60],
    [118, 132, 15, 40, 15, 30, 85, 80], [132, 167, 105, 98, 108, 92, 32, 26], [167, 197, 124, 120, 118, 122, 42, 44],
    [197, 217, 108, 98, 104, 102, 25, 25], [217, 231, 62, 68, 62, 62, 16, 14], [231, 239, 42, 5, 40, 5, 2, 4],
    [239, 253, 38, 36, 46, 38, 8, 6], [253, 296, 105, 107, 103, 105, 34, 26], [296, 297, 45, 45, 38, 38, 0, 0],
    [297, 360, 104, 104, 104, 108, 44, 26], [360, 407, 100, 100, 102, 110, 44, 30], [407, 455, 122, 120, 118, 120, 40, 42],
    [455, 461, 125, 95, 125, 95, 8, 8], [461, 475, 62, 4, 62, 4, 8, 2], [475, 492, 7, 8, 11, 11, 6, 8],
    [492, 515, 82, 80, 92, 92, 32, 32], [515, 524, 38, 38, 38, 38, 40, 60], [524, 560, 76, 88, 80, 105, 38, 48],
    [560, 570, 90, 8, 90, 12, 4, 4], [570, 583, 4, 5, 7, 6, 5, 14], [583, 594, 18, 20, 19, 21, 3, 3],
    [594, 731, 108, 108, 108, 110, 23, 18], [731, 746, 30, 34, 30, 36, 62, 72], [746, 751, 52, 60, 70, 80, 55, 30],
    [751, 797, 110, 112, 106, 108, 28, 26], [797, 837, 100, 100, 104, 100, 26, 22], [837, 840, 50, 20, 50, 20, 2, 2],
    [840, 846, 16, 6, 16, 6, 4, 4], [846, 858, 4, 4, 4, 4, 2, 1], [858, 872, 18, 18, 17, 20, 4, 4],
    [872, 879, 6, 4, 6, 3, 3, 2], [879, 917, 66, 72, 62, 90, 35, 40], [917, 969, 118, 118, 126, 135, 28, 18],
    [969, 973, 50, 58, 50, 60, 8, 8], [973, 1014, 122, 130, 125, 145, 32, 35], [1014, 1017, 50, 60, 50, 60, 8, 8],
    [1017, 1039, 112, 118, 122, 130, 28, 30], [1039, 1041, 50, 50, 52, 52, 0, 0], [1041, 1050, 110, 118, 130, 138, 22, 20],
    [1050, 1051, 50, 50, 48, 48, 0, 0], [1051, 1086, 120, 130, 132, 142, 28, 25], [1086, 1089, 70, 60, 68, 85, 4, 4],
    [1089, 1113, 115, 118, 126, 130, 30, 14], [1113, 1128, 38, 30, 44, 28, 28, 24], [1128, 1132, 8, 12, 6, 12, 4, 4],
    [1132, 1152, 36, 35, 24, 23, 6, 12], [1152, 1156, 16, 4, 10, 3, 4, 3], [1156, 1164, 115, 115, 112, 118, 8, 8],
    [1164, 1318, 122, 124, 118, 126, 38, 34], [1318, 1322, 110, 85, 110, 85, 3, 3], [1322, 1330, 64, 42, 70, 42, 6, 6],
    [1330, 1341, 38, 5, 38, 6, 3, 3], [1341, 1364, 3, 3, 4, 4, 4, 6], [1364, 1380, 21, 22, 17, 18, 7, 6],
    [1380, 1420, 90, 88, 84, 90, 34, 36], [1420, 1426, 70, 8, 64, 10, 5, 5], [1426, 1435, 6, 6, 6, 4, 55, 50],
    [1435, 1449, 38, 38, 39, 42, 5, 6], [1449, 1465, 105, 112, 105, 108, 15, 18], [1465, 1509, 128, 140, 128, 135, 28, 32],
    [1509, 1516, 37, 37, 41, 42, 3, 2], [1516, 1556, 126, 140, 130, 135, 32, 30], [1556, 1558, 110, 108, 118, 112, 2, 2],
    [1558, 1568, 44, 42, 50, 48, 4, 5], [1568, 1577, 40, 14, 40, 12, 2, 2], [1577, 1604, 4, 4, 6, 6, 3, 7],
    [1604, 1654, 6, 9, 7, 8, 9, 8]
];
const rightWave = [
    [0, 18, 58, 58, 58, 60, 16, 8], [18, 51, 108, 108, 106, 110, 25, 26], [51, 54, 80, 30, 75, 20, 2, 2],
    [54, 67, 12, 9, 12, 10, 6, 5], [67, 101, 112, 110, 105, 106, 30, 45], [101, 118, 70, 74, 66, 76, 60, 60],
    [118, 132, 34, 52, 34, 52, 76, 60], [132, 165, 100, 102, 100, 102, 26, 18], [165, 197, 114, 112, 104, 108, 36, 38],
    [197, 217, 104, 100, 98, 102, 24, 26], [217, 231, 64, 66, 60, 62, 26, 20], [231, 239, 32, 6, 25, 6, 22, 26],
    [239, 253, 32, 33, 35, 35, 10, 10], [253, 296, 104, 108, 100, 105, 28, 28], [296, 297, 35, 35, 32, 32, 0, 0],
    [297, 390, 98, 102, 100, 104, 38, 36], [390, 407, 88, 98, 90, 100, 26, 40], [407, 455, 120, 118, 115, 118, 40, 34],
    [455, 461, 118, 88, 112, 85, 6, 6], [461, 471, 36, 34, 38, 36, 5, 5], [471, 475, 6, 6, 6, 6, 26, 38],
    [475, 492, 10, 16, 12, 14, 24, 30], [492, 515, 96, 96, 94, 98, 32, 36], [515, 524, 50, 60, 45, 55, 44, 50],
    [524, 560, 84, 96, 80, 104, 46, 34], [560, 566, 100, 34, 92, 36, 2, 2], [566, 584, 5, 5, 5, 5, 20, 30],
    [584, 594, 22, 28, 24, 28, 6, 6], [594, 660, 112, 118, 108, 112, 14, 28], [660, 731, 117, 118, 110, 114, 20, 28],
    [731, 751, 55, 66, 62, 68, 62, 56], [751, 797, 118, 118, 114, 118, 15, 16], [797, 837, 110, 112, 100, 100, 20, 32],
    [837, 840, 55, 30, 50, 20, 2, 2], [840, 846, 20, 6, 18, 6, 3, 3], [846, 858, 4, 4, 4, 4, 1, 1],
    [858, 872, 18, 18, 16, 17, 5, 4], [872, 879, 4, 5, 4, 5, 2, 2], [879, 917, 58, 78, 66, 82, 46, 46],
    [917, 969, 116, 116, 124, 130, 22, 24], [969, 973, 60, 64, 56, 66, 8, 8], [973, 1014, 120, 130, 118, 142, 32, 32],
    [1014, 1017, 50, 60, 55, 60, 8, 8], [1017, 1039, 116, 120, 116, 128, 24, 28], [1039, 1041, 60, 60, 52, 52, 0, 0],
    [1041, 1050, 118, 118, 130, 136, 22, 16], [1050, 1051, 58, 58, 48, 48, 0, 0], [1051, 1086, 120, 132, 132, 146, 28, 22],
    [1086, 1089, 56, 56, 60, 70, 3, 3], [1089, 1113, 114, 120, 122, 122, 22, 20], [1113, 1132, 24, 26, 16, 24, 30, 70],
    [1132, 1152, 48, 47, 30, 32, 6, 14], [1152, 1156, 6, 4, 12, 4, 2, 2], [1156, 1164, 138, 138, 132, 138, 8, 12],
    [1164, 1318, 132, 134, 130, 134, 28, 26], [1318, 1322, 115, 85, 112, 75, 3, 3], [1322, 1330, 74, 44, 66, 44, 4, 4],
    [1330, 1341, 38, 5, 34, 5, 3, 3], [1341, 1364, 3, 3, 4, 5, 2, 4], [1364, 1420, 70, 66, 66, 64, 46, 48],
    [1420, 1428, 72, 10, 66, 10, 5, 5], [1428, 1435, 5, 5, 5, 5, 25, 30], [1435, 1449, 36, 36, 36, 38, 5, 5],
    [1449, 1465, 120, 124, 116, 126, 24, 22], [1465, 1509, 138, 144, 130, 138, 34, 28], [1509, 1516, 35, 34, 36, 36, 3, 2],
    [1516, 1558, 138, 148, 128, 136, 34, 32], [1558, 1568, 42, 38, 42, 40, 3, 4], [1568, 1577, 32, 12, 34, 14, 2, 2],
    [1577, 1579, 4, 4, 4, 4, 1, 1], [1579, 1604, 14, 16, 13, 18, 8, 8], [1604, 1637, 18, 21, 19, 18, 12, 16],
    [1637, 1647, 18, 4, 15, 4, 4, 4], [1647, 1654, 3, 3, 4, 4, 6, 6]
];

// Single columns that stand out: x -> [up, down]
const leftPeaks = {
    28: [139, 100], 84: [146, 100], 166: [149, 148], 174: [159, 140], 182: [154, 156], 190: [161, 162],
    215: [129, 145], 310: [149, 112], 321: [142, 138], 410: [155, 155], 448: [162, 157], 430: [158, 150],
    478: [29, 12], 488: [20, 10], 560: [117, 130], 592: [87, 86], 598: [156, 110], 605: [118, 133],
    665: [129, 118], 716: [120, 133], 918: [146, 158], 961: [144, 172], 997: [160, 160], 1007: [140, 180],
    1001: [150, 175], 1039: [50, 166], 1064: [150, 180], 1065: [148, 180], 1084: [148, 180], 1078: [140, 169],
    937: [120, 75], 945: [90, 88], 955: [98, 100], 993: [78, 76], 1031: [78, 94], 1056: [90, 95],
    1102: [120, 85], 1107: [92, 97], 1118: [59, 48], 1136: [50, 30], 1169: [156, 120], 1178: [130, 154],
    1242: [130, 161], 1250: [130, 160], 1262: [155, 160], 1292: [158, 120], 1300: [160, 120], 1316: [156, 135],
    1228: [112, 111], 1267: [112, 107], 1287: [28, 30], 1414: [127, 108], 1389: [100, 123], 1428: [86, 90],
    1438: [75, 44], 1464: [82, 76], 1475: [70, 83], 1488: [78, 88], 1483: [162, 168], 1519: [165, 140],
    1523: [67, 86], 1537: [40, 43], 1544: [60, 88], 1545: [155, 163], 1600: [29, 16], 1608: [37, 22],
    1611: [24, 12], 1625: [20, 8], 1648: [16, 8]
};
const rightPeaks = {
    35: [132, 125], 82: [141, 130], 96: [110, 151], 169: [148, 136], 195: [151, 130], 341: [142, 105],
    369: [147, 120], 410: [153, 145], 427: [159, 150], 430: [159, 145], 448: [153, 151], 394: [70, 60],
    480: [38, 43], 538: [135, 90], 559: [143, 130], 592: [79, 73], 605: [154, 118], 615: [156, 115],
    625: [151, 142], 635: [153, 130], 653: [130, 150], 665: [152, 110], 676: [154, 118], 688: [147, 110],
    706: [159, 145], 716: [155, 140], 726: [145, 148], 779: [120, 163], 792: [149, 118], 817: [157, 133],
    827: [162, 112], 892: [180, 115], 893: [100, 127], 931: [148, 120], 966: [149, 130], 961: [120, 162],
    1000: [163, 150], 1009: [159, 172], 1005: [140, 176], 1078: [150, 180], 1076: [167, 150], 1065: [150, 170],
    1083: [160, 140], 937: [93, 90], 945: [98, 80], 993: [96, 80], 1031: [110, 90], 1056: [82, 140],
    1112: [130, 170], 1116: [97, 143], 1136: [70, 106], 1179: [159, 140], 1238: [161, 145], 1292: [161, 140],
    1228: [112, 123], 1267: [122, 112], 1287: [42, 40], 1470: [167, 140], 1464: [112, 100], 1475: [105, 98],
    1483: [176, 150], 1488: [105, 119], 1485: [165, 165], 1523: [96, 85], 1537: [46, 40], 1544: [102, 101],
    1528: [168, 140], 1553: [174, 140], 1557: [167, 165], 1429: [49, 71], 1611: [44, 40], 1612: [42, 51],
    1618: [35, 30]
};

let seed = 7;
function random() {
    seed = (seed * 16807) % 2147483647;
    return seed / 2147483647;
}

// Mostly moderate noise, with a few tall spikes and deep notches
function jitter() {
    const kind = random();
    const r = random();
    if (kind < 0.08) {
        return -0.3 - r * 0.7;
    }
    if (kind > 0.88) {
        return 0.6 + r * 0.5;
    }
    return r * 0.75 - 0.15;
}

function waveColumns(segments, peaks, center) {
    const cols = [];
    segments.forEach(([x0, x1, u0, u1, d0, d1, us, ds]) => {
        for (let x = x0; x < x1; x++) {
            const t = (x - x0) / (x1 - x0);
            let up = u0 + (u1 - u0) * t + us * jitter();
            let down = d0 + (d1 - d0) * t + ds * jitter();
            if (peaks[x]) {
                [up, down] = peaks[x];
            }
            cols.push(`M${x + 0.5} ${Math.round(center - Math.max(up, 2))}V${Math.round(center + Math.max(down, 2))}`);
        }
    });
    return cols.join("");
}

function drawChannel(id, segments, peaks) {
    const step = WIDTH / MINUTES;
    let grid = "";
    for (let m = 1; m < MINUTES; m++) {
        grid += `M${Math.floor(m * step) + 0.5} 0V360`;
    }
    [51, 89, 115, 134, 156, 202, 224, 243, 269, 307, 359].forEach(y => {
        grid += `M0 ${y + 0.5}H${WIDTH}`;
    });
    document.getElementById(id).innerHTML = `
        <path d="${grid}" stroke="#003800"/>
        <path d="M0 18.5H${WIDTH}M0 340.5H${WIDTH}" stroke="#fff"/>
        <path d="${waveColumns(segments, peaks, 179.5)}" stroke="${GREEN}"/>
        <path d="M0 179.5H${WIDTH}" stroke="#48c890"/>
    `;
}

function add(parent, tag, className, prop, value, text) {
    const el = document.createElement(tag);
    el.className = className;
    el.style[prop] = value + "%";
    el.textContent = text || "";
    parent.appendChild(el);
}

drawChannel("left", leftWave, leftPeaks);
drawChannel("right", rightWave, rightPeaks);

// Cue markers above, over and below the waveform
const plot = document.getElementById("plot");
const markersTop = document.getElementById("markersTop");
const markersLow = document.getElementById("markersLow");
cues.forEach((x, i) => {
    const left = x / WIDTH * 100;
    add(plot, "div", "cue", "left", left);
    add(markersTop, "span", "marker", "left", left);
    add(markersTop, "span", "marker-number", "left", left, String(i + 1));
    add(markersLow, "span", "marker", "left", left);
});
add(plot, "div", "cue cue-cursor", "left", cursor / WIDTH * 100);
add(markersTop, "span", "marker marker-cursor", "left", cursor / WIDTH * 100);
add(markersLow, "span", "marker marker-cursor", "left", cursor / WIDTH * 100);

// Time ruler
const timeline = document.getElementById("timeline");
for (let half = 0; half <= 72; half++) {
    const left = half / 2 / MINUTES * 100;
    add(timeline, "i", half % 2 ? "minor" : "", "left", left);
    if (half % 2 === 0 && half > 0 && half < 72) {
        add(timeline, "span", "", "left", left, half / 2 + ":00");
    }
}
add(timeline, "span", "", "left", 0.8, "чмс");
add(timeline, "span", "", "left", 99.2, "чмс");

// Amplitude rulers
const dbLabels = [[51, "-3"], [89, "-6"], [115, "-9"], [134, "-12"], [156, "-18"], [180, "-∞"],
    [202, "-18"], [224, "-12"], [243, "-9"], [269, "-6"], [307, "-3"]];
["scaleLeft", "scaleRight"].forEach((id, n) => {
    const el = document.getElementById(id);
    dbLabels.forEach(([y, text]) => {
        add(el, "i", "", "top", y / 3.6);
        add(el, "span", "", "top", y / 3.6, text);
    });
    [0, 18, 340, 359].forEach(y => add(el, "i", "", "top", y / 3.6));
    [36, 65, 77, 98, 107, 122, 128, 139, 144, 149, 209, 214, 219, 230, 236, 251, 260, 281, 293, 322].forEach(y => {
        add(el, "i", "minor", "top", y / 3.6);
    });
    add(el, "span", "", "top", n ? 97.8 : 1.7, "dB");
});

// Level meter ruler, -72 dB to 0 dB
const meter = document.getElementById("meterScale");
let ticks = "";
for (let i = 0; i <= 432; i++) {
    ticks += `M${Math.floor(i * 1897 / 432) + 0.5} 0V${i % 6 ? 2 : 5}`;
}
meter.querySelector("svg").innerHTML = `<path d="${ticks}" stroke="#111"/>`;
add(meter, "span", "unit", "left", 0, "dB");
for (let db = -70; db <= 0; db++) {
    add(meter, "span", "", "left", (db + 72) / 72 * 100, String(db));
}
```
